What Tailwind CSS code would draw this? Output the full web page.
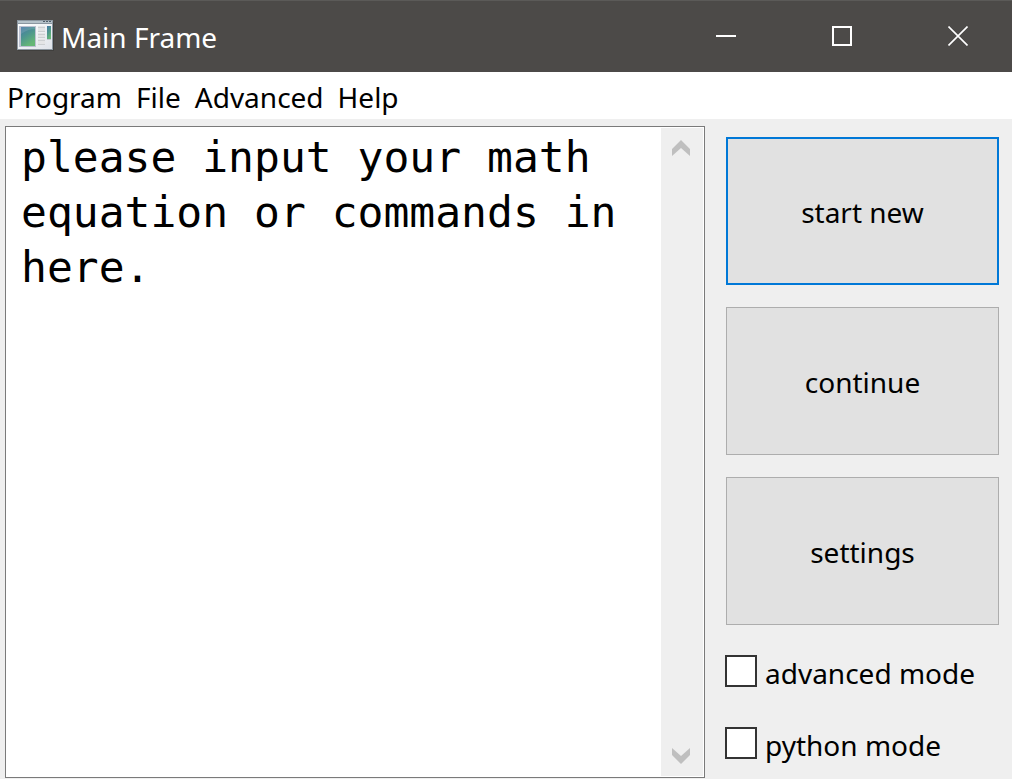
<!DOCTYPE html>
<html lang="en">
<head>
<meta charset="utf-8">
<meta name="viewport" content="width=device-width, initial-scale=1">
<title>Main Frame</title>
<script src="https://cdn.jsdelivr.net/npm/@tailwindcss/browser@4"></script>
</head>
<body class="flex h-screen flex-col bg-[#efefef] font-['Noto_Sans','Open_Sans',sans-serif] text-[28px] leading-9 text-black">
  <header class="flex h-[72px] shrink-0 items-center border-t border-[#5b5a58] bg-[#4c4a48] pb-0.5 pl-4 text-white">
    <svg class="mr-[7px] h-8 w-[38px]" viewBox="0 0 38 32" aria-hidden="true">
      <defs>
        <linearGradient id="screen" x1="0" y1="0" x2="0.5" y2="1"><stop offset="0" stop-color="#4577a6"/><stop offset="0.5" stop-color="#4d958f"/><stop offset="1" stop-color="#65b776"/></linearGradient>
        <linearGradient id="frame" x1="0" y1="0" x2="1" y2="1"><stop offset="0" stop-color="#ffffff"/><stop offset="1" stop-color="#dfe3ea"/></linearGradient>
      </defs>
      <path d="M2 2h36v29H2z" fill="#343332" opacity=".5"/>
      <path d="M1 0h36v30H1z" fill="#8c97a1"/>
      <path d="M2 4h34v25H2z" fill="url(#frame)"/>
      <path d="M2 1h34v2H2z" fill="#b6c2ca"/>
      <path d="M27 1h2v1h-2zM30 1h2v1h-2zM33 1h2v1h-2z" fill="#4d5b68"/>
      <path d="M3 6h17v21H3z" fill="#bbc1d1"/>
      <path d="M5 7h14v19H5z" fill="url(#screen)"/>
      <path d="M5 14q7-5 14-5V7H5z" fill="#fff" opacity=".12"/>
      <path d="M22 6h7v5h-7zM22 13h7v4h-7zM22 19h7v6h-7z" fill="#e4e5e7"/>
      <path d="M22 7.500h7M22 11.500h7M22 14.500h7M22 17.500h7M22 20.500h7M22 24.500h7" stroke="#cdd0d3"/>
      <path d="M31 6h4v14h-4z" fill="#c0c8d2"/>
      <path d="M31 6h4v13h-4z" fill="url(#screen)"/>
    </svg>
    <h1 class="mt-0.5 flex-1">Main Frame</h1>
    <button type="button" aria-label="Minimize" class="grid h-full w-[116px] place-items-center">
      <svg class="h-5 w-5" viewBox="0 0 20 20"><path d="M0 10h20" stroke="#fff" stroke-width="2"/></svg>
    </button>
    <button type="button" aria-label="Maximize" class="grid h-full w-[116px] place-items-center">
      <svg class="h-5 w-5" viewBox="0 0 20 20"><path d="M1 1h18v18H1z" fill="none" stroke="#fff" stroke-width="2"/></svg>
    </button>
    <button type="button" aria-label="Close" class="grid h-full w-[112px] place-items-center pl-1">
      <svg class="h-5 w-5" viewBox="0 0 20 20"><path d="M.5.5l19 19M19.500 .5l-19 19" stroke="#fff" stroke-width="1.600"/></svg>
    </button>
  </header>

  <nav aria-label="Main menu" class="flex shrink-0 gap-[14px] bg-white px-[7px] pt-[7px] pb-1">
    <button type="button">Program</button>
    <button type="button">File</button>
    <button type="button">Advanced</button>
    <button type="button">Help</button>
  </nav>

  <main class="flex min-h-0 flex-1 gap-5 pt-[7px] pr-[13px] pb-px pl-[5px]">
    <section class="flex min-w-0 flex-1 border border-[#7a7a7a] bg-white p-px">
      <textarea aria-label="Math equation or commands" spellcheck="false" class="min-w-0 flex-1 resize-none overflow-hidden pt-[2px] pl-[14px] font-['DejaVu_Sans_Mono',monospace] text-[43px] leading-[55px] outline-none">please input your math equation or commands in here.</textarea>
      <div class="flex w-[42px] shrink-0 flex-col justify-between bg-[#efefef]">
        <button type="button" aria-label="Scroll up" class="grid h-10 place-items-center pr-0.5">
          <svg class="h-4 w-[18px]" viewBox="0 0 18 16"><path d="M0 9l9-9 9 9v7L9 8l-9 8z" fill="#bfbfbf"/></svg>
        </button>
        <button type="button" aria-label="Scroll down" class="grid h-10 place-items-center pr-0.5">
          <svg class="h-4 w-[18px]" viewBox="0 0 18 16"><path d="M0 7l9 9 9-9V0L9 8 0 0z" fill="#bfbfbf"/></svg>
        </button>
      </div>
    </section>

    <aside class="flex w-[274px] shrink-0 flex-col pt-[11px]">
      <div class="ml-px flex flex-col gap-[22px]">
        <button type="button" class="h-[148px] border-2 border-[#0078d7] bg-[#e1e1e1] pt-0.5">start new</button>
        <button type="button" class="h-[148px] border border-[#adadad] bg-[#e1e1e1] pt-0.5">continue</button>
        <button type="button" class="h-[148px] border border-[#adadad] bg-[#e1e1e1] pt-0.5">settings</button>
      </div>
      <div class="mt-[30px] flex flex-col gap-9">
        <div class="flex items-start gap-2">
          <input id="advanced" type="checkbox" class="size-8 shrink-0 appearance-none border-2 border-[#333] bg-white checked:bg-[#0078d7]">
          <label for="advanced" class="whitespace-nowrap">advanced mode</label>
        </div>
        <div class="flex items-start gap-2">
          <input id="python" type="checkbox" class="size-8 shrink-0 appearance-none border-2 border-[#333] bg-white checked:bg-[#0078d7]">
          <label for="python" class="whitespace-nowrap">python mode</label>
        </div>
      </div>
    </aside>
  </main>
</body>
</html>
